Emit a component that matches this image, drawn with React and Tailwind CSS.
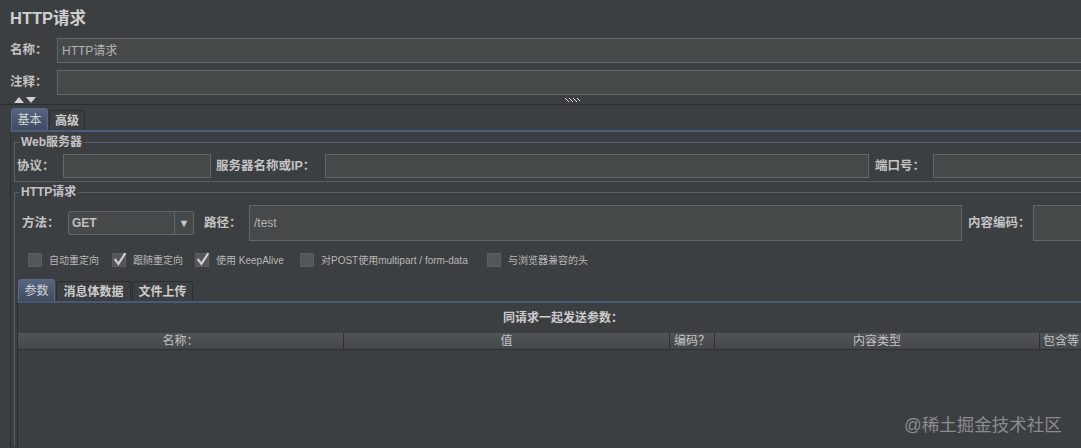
import React from 'react';

const FONT = "font-['Liberation_Sans','Noto_Sans_CJK_SC',sans-serif]";

const Input = ({ className = '', value = '' }) => (
  <div
    className={`h-[24px] shrink-0 border border-[#646768] bg-[#45494a] px-[4px] flex items-center text-[12px] text-[#b4b4b4] ${className}`}
  >
    {value}
  </div>
);

const Label = ({ children, className = '' }) => (
  <span className={`shrink-0 text-[12.5px] font-bold text-[#c4c4c4] ${className}`}>{children}</span>
);

const Check = ({ checked, label, width }) => (
  <div className="flex items-center shrink-0" style={{ width }}>
    <div className="w-[14px] h-[14px] bg-[#535658] border border-[#5b5e60] relative shrink-0">
      {checked && (
        <svg viewBox="0 0 14 14" className="absolute -left-[1px] -top-[3px] w-[15px] h-[16px]">
          <path d="M2.5 7 L6 11.5 L12.5 1.5" fill="none" stroke="#cfcfcf" strokeWidth="2" />
        </svg>
      )}
    </div>
    <span className="ml-[7px] text-[10px] text-[#b8b8b8] whitespace-nowrap">{label}</span>
  </div>
);

const Tab = ({ active, children, width }) =>
  active ? (
    <div
      className="h-[22px] flex items-center justify-center rounded-t-[3px] bg-gradient-to-b from-[#566680] to-[#3f4b60] border border-[#5a6a85] border-b-0 text-[12px] text-[#d4d4d4] shrink-0"
      style={{ width }}
    >
      {children}
    </div>
  ) : (
    <div
      className="h-[20px] flex items-center justify-center rounded-t-[3px] bg-[#3c3f41] border border-[#2b2d2e] border-b-0 text-[12px] font-bold text-[#cdcdcd] shrink-0 ml-[1px]"
      style={{ width }}
    >
      {children}
    </div>
  );

const Fieldset = ({ title, className = '', children }) => (
  <fieldset className={`border border-[#5c5f61] border-r-0 ${className}`}>
    <legend className="ml-[4px] px-[2px] text-[12px] leading-[13px] font-bold text-[#c4c4c4]">{title}</legend>
    {children}
  </fieldset>
);

export default function App() {
  return (
    <div className={`w-[1081px] h-[448px] overflow-hidden bg-[#3c3f41] relative ${FONT}`}>
      <div className="h-[36px] flex items-center pl-[10px] text-[16.5px] font-bold text-[#cfcfcf]">HTTP请求</div>

      <div className="mt-[2px] flex items-center h-[25px]">
        <Label className="pl-[10px] w-[57px]">名称：</Label>
        <Input className="h-[25px] w-[1040px]" value="HTTP请求" />
      </div>
      <div className="mt-[7px] flex items-center h-[25px]">
        <Label className="pl-[10px] w-[57px]">注释：</Label>
        <Input className="h-[25px] w-[1040px]" />
      </div>

      <div className="h-[10px] border-b border-[#2b2d2e] flex items-center relative">
        <svg viewBox="0 0 24 8" className="ml-[13px] w-[24px] h-[8px]">
          <path d="M1 7 L6 1 L11 7 Z" fill="#d0d0d0" />
          <path d="M13 1 L23 1 L18 7 Z" fill="#d0d0d0" />
        </svg>
        <svg viewBox="0 0 16 4" className="ml-[528px] w-[16px] h-[4px]">
          {[0, 2, 4, 6, 8, 10, 12, 14].map((x) => (
            <rect key={x} x={x} y={x % 4 === 0 ? 0 : 2} width="1" height="1" fill="#e0e0e0" />
          ))}
          {[1, 3, 5, 7, 9, 11, 13].map((x) => (
            <rect key={x} x={x} y={x % 4 === 1 ? 1 : 3} width="1" height="1" fill="#e0e0e0" />
          ))}
        </svg>
      </div>

      <div className="mt-[3px] flex items-end h-[22px] pl-[11px]">
        <Tab active width={37}>基本</Tab>
        <Tab width={36}>高级</Tab>
      </div>

      <div className="border-t-2 border-[#4a5d7c] ml-[10px] border-l border-l-[#2c2e2f] pl-[3px] pt-[4px] h-[320px]">
        <Fieldset title="Web服务器" className="pb-[3px]">
          <div className="flex items-center mt-[5px] pl-[2px]">
            <Label className="w-[46px]">协议：</Label>
            <Input className="w-[148px]" />
            <Label className="ml-[5px] w-[109px]">服务器名称或IP：</Label>
            <Input className="w-[544px]" />
            <Label className="ml-[6px] w-[58px]">端口号：</Label>
            <Input className="w-[200px]" />
          </div>
        </Fieldset>

        <Fieldset title="HTTP请求" className="mt-[4px] h-[260px] border-b-0">
          <div className="flex items-center mt-[6px] pl-[7px] h-[36px]">
            <Label className="w-[46px]">方法：</Label>
            <div className="h-[24px] w-[126px] shrink-0 flex border border-[#646768] rounded-[2px] bg-[#45494a]">
              <span className="flex-1 flex items-center pl-[3px] text-[12px] font-bold text-[#c0c0c0]">GET</span>
              <span className="w-[19px] border-l border-[#646768] flex items-center justify-center text-[11px] text-[#c8c8c8]">▼</span>
            </div>
            <Label className="ml-[10px] w-[45px]">路径：</Label>
            <Input className="h-[36px] w-[713px]" value="/test" />
            <Label className="ml-[6px] w-[65px]">内容编码：</Label>
            <Input className="h-[36px] w-[200px]" />
          </div>

          <div className="flex items-center mt-[12px] pl-[13px] h-[14px]">
            <Check label="自动重定向" width={84} />
            <Check checked label="跟随重定向" width={83} />
            <Check checked label="使用 KeepAlive" width={105} />
            <Check label="对POST使用multipart / form-data" width={187} />
            <Check label="与浏览器兼容的头" width={120} />
          </div>

          <div className="mt-[12px] flex items-end h-[22px] pl-[3px]">
            <Tab active width={37}>参数</Tab>
            <Tab width={75}>消息体数据</Tab>
            <Tab width={61}>文件上传</Tab>
          </div>
          <div className="ml-[2px] border-t-2 border-[#465a78] border-l border-l-[#2c2e2f] h-[200px]">
            <div className="w-[1090px] h-[30px] flex items-center justify-center text-[12px] font-bold text-[#cccccc]">
              同请求一起发送参数：
            </div>
            <div className="flex h-[17px] bg-gradient-to-b from-[#515456] to-[#45484a] border-b border-[#2e3031] text-[12px] text-[#c4c4c4]">
              <div className="w-[326px] shrink-0 flex items-center justify-center border-r border-[#2e3031]">名称：</div>
              <div className="w-[326px] shrink-0 flex items-center justify-center border-r border-[#2e3031]">值</div>
              <div className="w-[45px] shrink-0 flex items-center justify-center border-r border-[#2e3031]">编码？</div>
              <div className="w-[325px] shrink-0 flex items-center justify-center border-r border-[#2e3031]">内容类型</div>
              <div className="w-[60px] shrink-0 flex items-center pl-[3px]">包含等</div>
            </div>
          </div>
        </Fieldset>
      </div>

      <div className="absolute left-[904px] top-[412px] text-[17.5px] text-[#8a8c8e] whitespace-nowrap">@稀土掘金技术社区</div>
    </div>
  );
}
